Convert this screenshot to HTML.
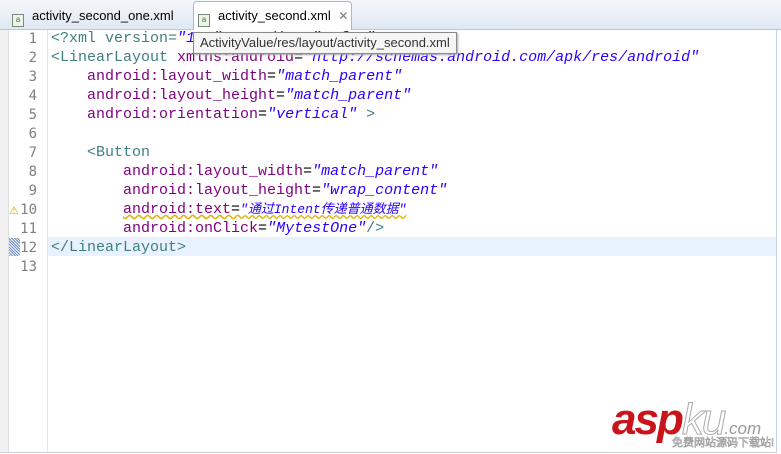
<!DOCTYPE html>
<html><head><style>
body{margin:0;width:781px;height:454px;background:#fff;position:relative;overflow:hidden;font-family:"Liberation Sans",sans-serif}
.tabs{position:absolute;left:0;top:0;width:781px;height:29px;background:linear-gradient(#f4f7fb,#dfe8f3);border-bottom:1px solid #b9c8dc}
.tab{position:absolute;top:4px;height:25px;font-size:13px;line-height:23px;color:#000}
.t1{left:8px}
.t2{left:193px;width:157px;top:1px;height:28px;background:#fff;border:1px solid #a9b8cc;border-bottom:none;border-radius:4px 4px 0 0;line-height:28px;padding-left:0}
.ic{display:inline-block;width:10px;height:11px;border:1px solid #7a8a7a;background:#eef3e8;vertical-align:-2px;margin:0 8px 0 4px;font-size:8px;line-height:10px;text-align:center;color:#3a7a3a}
.ed{position:absolute;left:0;top:30px;width:776px;height:422px;border-right:1px solid #c8d0da;border-bottom:1px solid #c8d0da}
.lb{position:absolute;left:0;top:0;width:8px;height:422px;background:#f0f0f0;border-right:1px solid #e0e0e0}
.gut{position:absolute;left:9px;top:0;width:38px;height:422px;border-right:1px solid #e6e6e6}
.ln{position:absolute;left:0;width:28px;text-align:right;font:15px/19px "DejaVu Sans Mono",monospace;font-size:14px;color:#808080}
.code{position:absolute;left:51px;font:15px/19px "Liberation Mono",monospace;white-space:pre;color:#3f7f7f}
.a{color:#7f007f}.s{color:#2a00ff;font-style:italic}.p{color:#000}
.hl{position:absolute;left:48px;top:207px;width:728px;height:19px;background:#e8f2fe}
.tip{position:absolute;left:193px;top:32px;height:20px;padding:0 6px;background:#f5f5f5;border:1px solid #8a8a8a;box-shadow:1px 1px 2px #aaa;font-size:13px;line-height:20px;color:#333}
.logo{position:absolute;left:612px;top:398px;font:italic bold 44px/44px "Liberation Sans",sans-serif;color:#c8141a;letter-spacing:-2px}
.logo .k{color:#fff;-webkit-text-stroke:1px #aaa;font-weight:normal}
.logo .c{font-size:17px;color:#999;font-weight:normal;letter-spacing:0}
.sub{position:absolute;left:672px;top:437px;font:11px/12px "Liberation Sans","Noto Sans CJK SC",sans-serif;color:#fff;-webkit-text-stroke:0.5px #888}
</style></head><body>
<div class="tabs">
<div class="tab t1"><span class="ic">a</span>activity_second_one.xml</div>
<div class="tab t2"><span class="ic">a</span>activity_second.xml <span style="color:#777;font-size:12px;margin-left:4px">✕</span></div>
</div>
<div class="ed">
<div class="lb"></div>
<div class="hl"></div>
<div class="gut">
<div class="ln" style="top:0">1</div><div class="ln" style="top:19px">2</div><div class="ln" style="top:38px">3</div><div class="ln" style="top:57px">4</div><div class="ln" style="top:76px">5</div><div class="ln" style="top:95px">6</div><div class="ln" style="top:114px">7</div><div class="ln" style="top:133px">8</div><div class="ln" style="top:152px">9</div><div class="ln" style="top:171px">10</div><div class="ln" style="top:190px">11</div><div class="ln" style="top:209px">12</div><div class="ln" style="top:228px">13</div>
<div style="position:absolute;left:0;top:174px;color:#d8a000;font-size:11px">⚠</div>
<div style="position:absolute;left:0;top:208px;width:11px;height:18px;background:repeating-linear-gradient(45deg,#6a8ac8 0 1px,#fff 1px 2px)"></div>
</div>
<div class="code" style="top:-1px">&lt;?xml version=<span class="s">"1.0" encoding="utf-8"</span>?&gt;
&lt;LinearLayout <span class="a">xmlns:android</span><span class="p">=</span><span class="s">"http://schemas.android.com/apk/res/android"</span>
    <span class="a">android:layout_width</span><span class="p">=</span><span class="s">"match_parent"</span>
    <span class="a">android:layout_height</span><span class="p">=</span><span class="s">"match_parent"</span>
    <span class="a">android:orientation</span><span class="p">=</span><span class="s">"vertical"</span> &gt;

    &lt;Button
        <span class="a">android:layout_width</span><span class="p">=</span><span class="s">"match_parent"</span>
        <span class="a">android:layout_height</span><span class="p">=</span><span class="s">"wrap_content"</span>
        <span class="a" style="text-decoration:underline wavy #e0b000">android:text</span><span class="p" style="text-decoration:underline wavy #e0b000">=</span><span class="s" style="text-decoration:underline wavy #e0b000;font-family:'Liberation Mono','Noto Sans CJK SC',monospace;font-size:13px">"通过Intent传递普通数据"</span>
        <span class="a">android:onClick</span><span class="p">=</span><span class="s">"MytestOne"</span>/&gt;
&lt;/LinearLayout&gt;
</div>
</div>
<div class="tip">ActivityValue/res/layout/activity_second.xml</div>
<div class="logo">asp<span class="k">ku</span><span class="c">.com</span></div>
<div class="sub">免费网站源码下载站!</div>
</body></html>
